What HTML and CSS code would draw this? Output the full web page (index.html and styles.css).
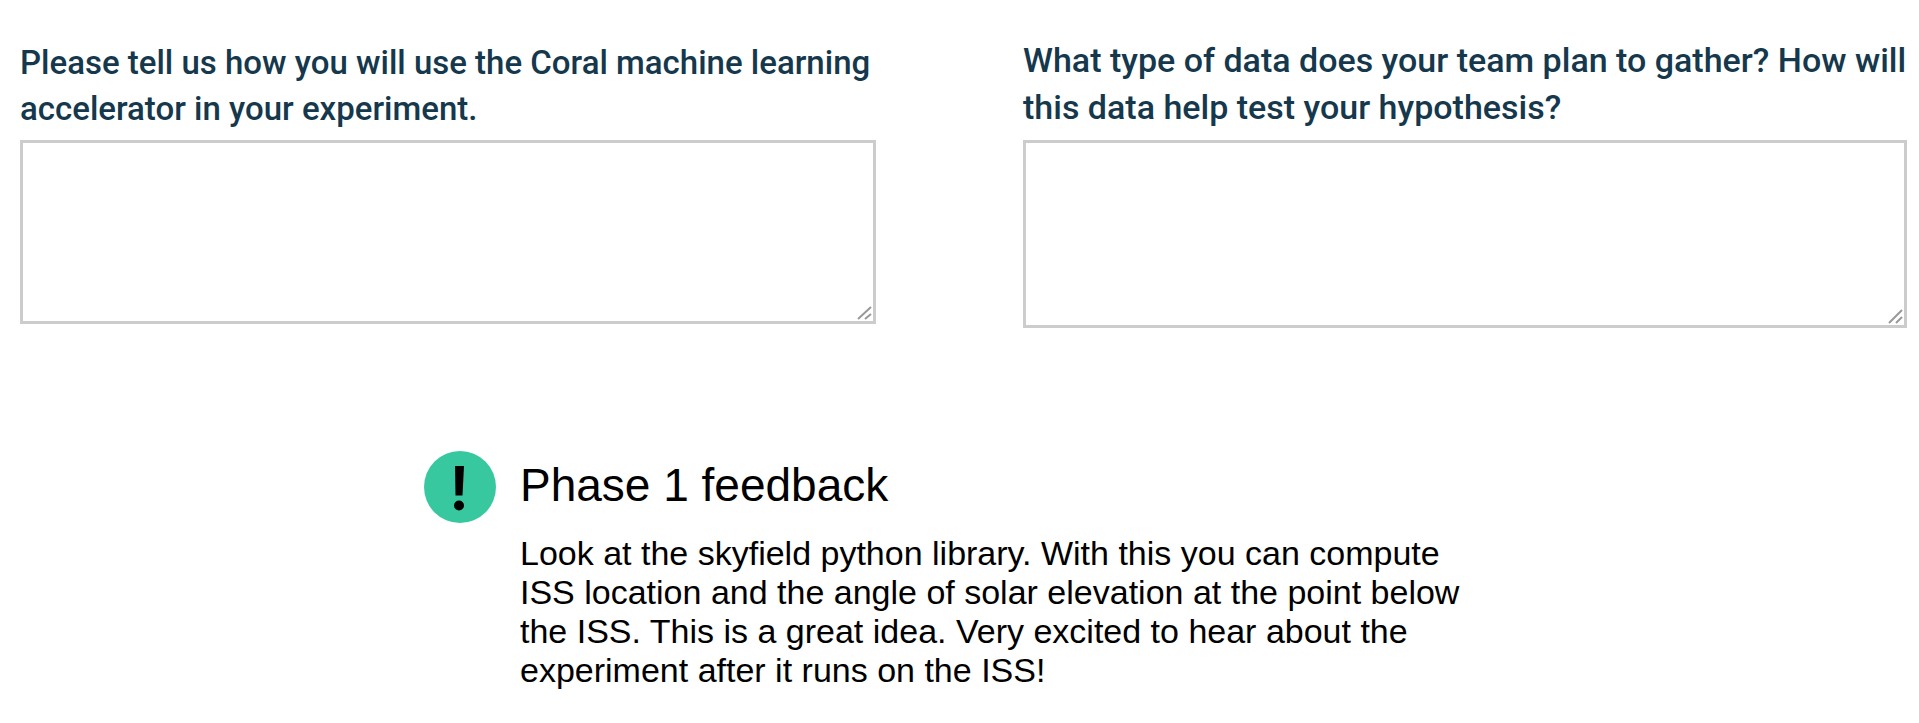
FILE: index.html
```html
<!DOCTYPE html>
<html lang="en">
<head>
<meta charset="utf-8">
<title>Phase 1 feedback</title>
<link rel="stylesheet" href="styles.css">
</head>
<body>
<main class="page">
  <form class="questions">
    <div class="question question-coral">
      <label class="question-label" for="coral">Please tell us how you will use the Coral machine learning accelerator in your experiment.</label>
      <div class="field">
        <textarea class="answer" id="coral"></textarea>
        <svg class="grip" viewBox="0 0 16 16" aria-hidden="true"><path d="M1 15 14 3M8 15 14 10"/></svg>
      </div>
    </div>
    <div class="question question-data">
      <label class="question-label" for="data">What type of data does your team plan to gather? How will this data help test your hypothesis?</label>
      <div class="field">
        <textarea class="answer" id="data"></textarea>
        <svg class="grip" viewBox="0 0 16 16" aria-hidden="true"><path d="M1 15 14 2M8 15 14 9"/></svg>
      </div>
    </div>
  </form>
  <section class="feedback">
    <svg class="feedback-icon" viewBox="0 0 72 72" aria-hidden="true"><circle cx="36" cy="36" r="36" fill="#38c8a0"/><path d="M31 15h9l-1.500 29.500h-7z"/><circle cx="35" cy="54.500" r="5"/></svg>
    <div class="feedback-body">
      <h2 class="feedback-title">Phase 1 feedback</h2>
      <p class="feedback-text">Look at the skyfield python library. With this you can compute ISS location and the angle of solar elevation at the point below the ISS. This is a great idea. Very excited to hear about the experiment after it runs on the ISS!</p>
    </div>
  </section>
</main>
</body>
</html>
```
FILE: styles.css
```css
* { box-sizing: border-box; }
body { margin: 0; background: #fff; color: #000; font-family: "Liberation Sans", Arial, sans-serif; }
.page { padding: 37px 12px 32px 20px; }
.questions { display: grid; grid-template-columns: 856fr 884fr; column-gap: 147px; align-items: end; }
.question-coral { padding-bottom: 4px; }
.question-label { display: block; font: 500 33px/46px Roboto, sans-serif; color: #15384d; margin-bottom: 8px; }
.question-data .question-label { font-size: 34px; line-height: 47px; margin-bottom: 9px; }
.field { position: relative; display: flex; }
.answer { width: 100%; height: 184px; padding: 8px; border: 3px solid #ccc; background: #fff; resize: none; font: 28px/36px Roboto, sans-serif; color: #15384d; outline: none; }
.question-data .answer { height: 188px; }
.grip { position: absolute; right: 3px; bottom: 4px; width: 16px; height: 16px; fill: none; stroke: #999; stroke-width: 2; pointer-events: none; }
.feedback { display: flex; gap: 24px; margin: 123px 0 0 404px; }
.feedback-icon { flex: none; width: 72px; height: 72px; }
.feedback-title { margin: 8px 0 23px; font-size: 46px; font-weight: 400; line-height: 52px; }
.feedback-text { margin: 0; max-width: 970px; font-size: 34px; line-height: 39px; }
```
